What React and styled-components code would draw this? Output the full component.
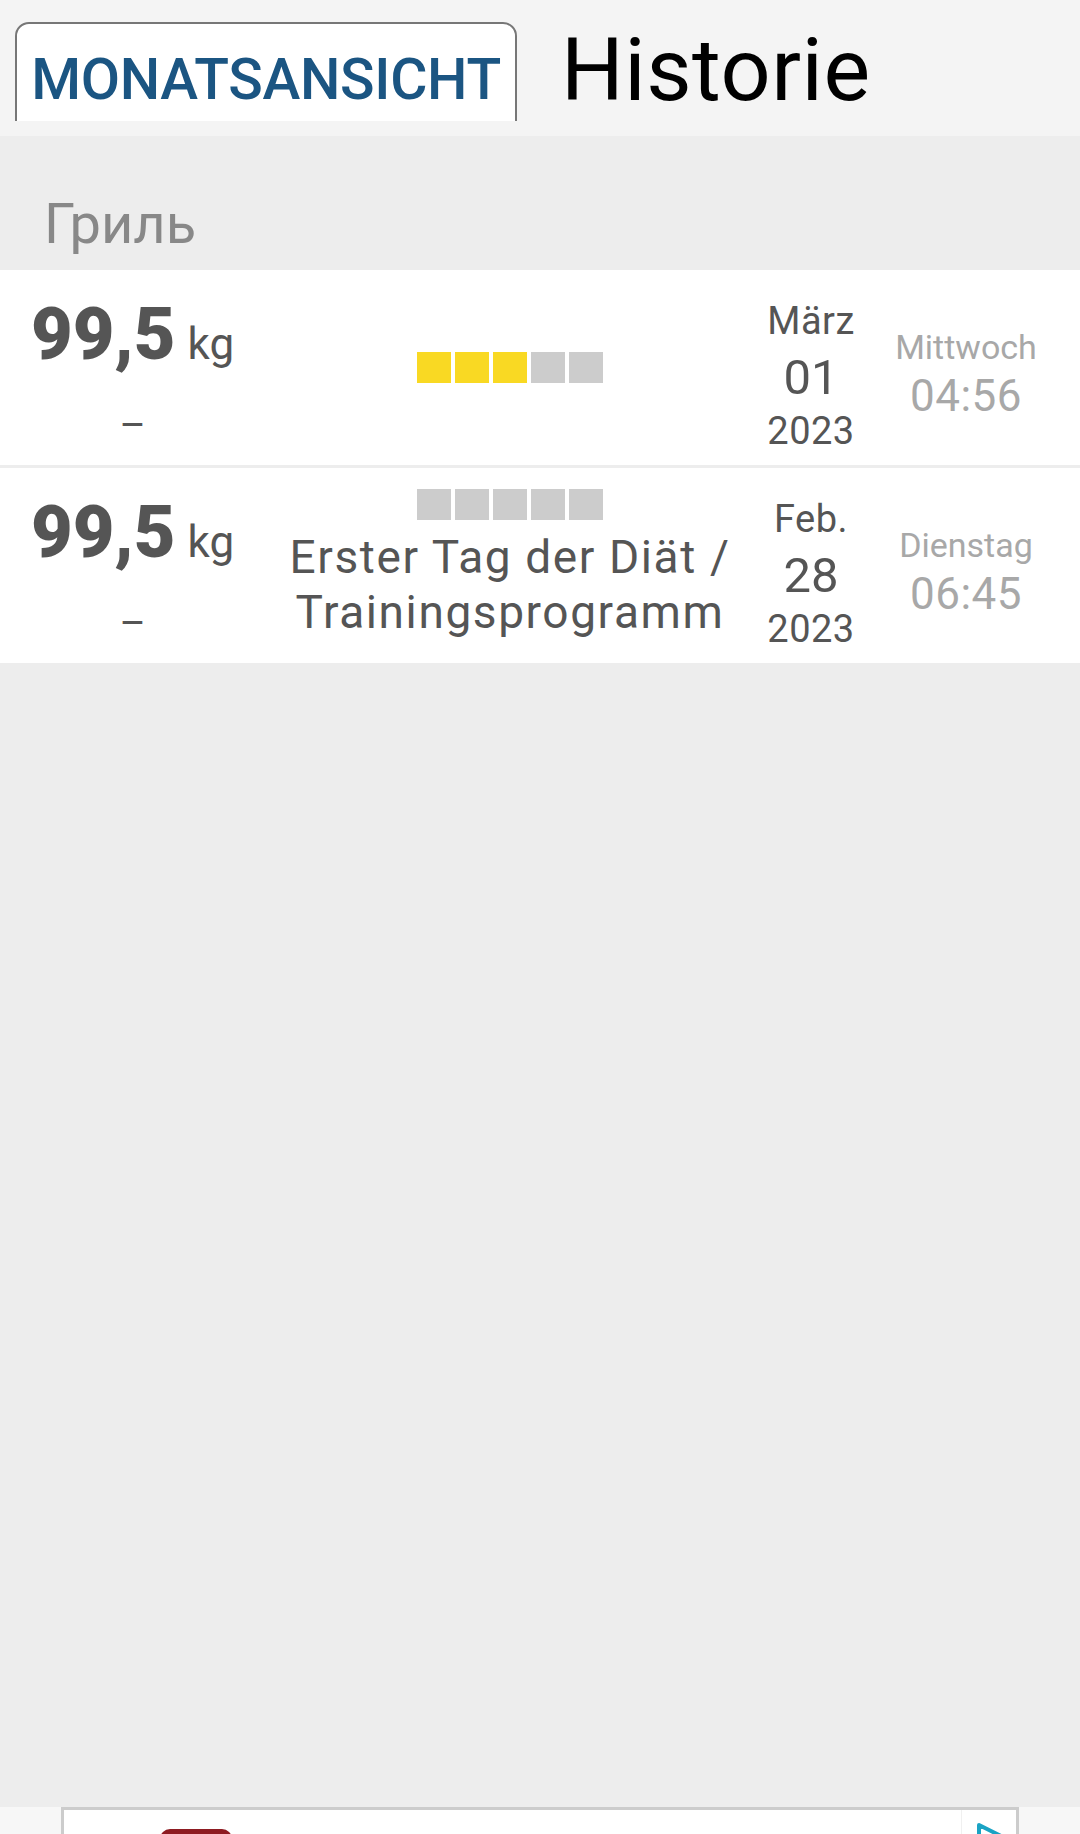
import styled, { createGlobalStyle } from 'styled-components'

const GlobalStyle = createGlobalStyle`
body {
  margin: 0;
  background: #ededed;
  font-family: Roboto, "Noto Sans", "Liberation Sans", sans-serif;
}`

const Page = styled.div`
height: 1834px;
overflow: hidden;
display: flex;
flex-direction: column;
background: #ededed;`

const Header = styled.header`
height: 136px;
box-sizing: border-box;
background: #f4f4f4;
display: flex;
align-items: flex-start;
padding: 22px 0 0 15px;`

const ButtonClip = styled.div`
width: 502px;
height: 99px;
overflow: hidden;`

const MonthButton = styled.button`
display: block;
width: 502px;
height: 115px;
box-sizing: border-box;
margin: 0;
padding: 0;
background: white;
border: 2px solid #777777;
border-radius: 14px;
color: #1b5582;
font-family: inherit;
font-size: 57px;
font-weight: 500;
line-height: 111px;
text-align: center;
letter-spacing: -0.3px;
white-space: nowrap;`

const Title = styled.h1`
margin: 4px 0 0 44px;
font-size: 88px;
font-weight: 400;
line-height: 88px;
letter-spacing: 0.5px;
color: #000;`

const SectionHeader = styled.div`
height: 134px;
box-sizing: border-box;
padding: 60px 0 0 44px;
font-size: 56px;
line-height: 56px;
color: #888888;`

const List = styled.div`
display: flex;
flex-direction: column;
gap: 3px;`

const Row = styled.div`
height: 195px;
background: white;
display: grid;
grid-template-columns: 265px 490px 112px 198px;
padding-right: 15px;`

const WeightCol = styled.div`
padding-top: 25px;
text-align: center;
color: #555555;`

const WeightLine = styled.div`
line-height: 80px;
white-space: nowrap;`

const WeightValue = styled.span`
font-size: 72px;
font-weight: 900;`

const Unit = styled.span`
font-size: 44px;
margin-left: 12px;`

const Dash = styled.div`
margin-top: 7px;
font-size: 40px;
line-height: 50px;`

const MiddleCol = styled.div`
display: flex;
flex-direction: column;
align-items: center;
justify-content: center;
padding-bottom: ${p => (p.$withNote ? '2px' : '0')};`

const Rating = styled.div`
display: flex;
gap: 4px;`

const Square = styled.span`
width: 34px;
height: 31px;
background: ${p => (p.$on ? '#f9d923' : '#cccccc')};`

const Note = styled.div`
margin-top: 10px;
font-size: 46px;
line-height: 55px;
letter-spacing: 1.6px;
color: #555555;
text-align: center;
white-space: nowrap;`

const DateCol = styled.div`
padding-top: 26px;
display: flex;
flex-direction: column;
align-items: center;
color: #555555;`

const Month = styled.div`
font-size: 38px;
line-height: 50px;
letter-spacing: 0.5px;`

const Day = styled.div`
margin-top: 4px;
font-size: 49px;
line-height: 56px;`

const Year = styled.div`
font-size: 38px;
line-height: 50px;
letter-spacing: 0.5px;`

const TimeCol = styled.div`
padding-top: 55px;
display: flex;
flex-direction: column;
align-items: center;
color: #a8a8a8;`

const Weekday = styled.div`
font-size: 34px;
line-height: 44px;`

const Time = styled.div`
margin-top: 1px;
font-size: 44px;
line-height: 52px;
letter-spacing: 0.5px;`

const Spacer = styled.div`
flex: 1;`

const AdBar = styled.div`
height: 27px;
background: #f7f7f7;
padding: 0 61px;
display: flex;`

const AdFrame = styled.div`
flex: 1;
display: flex;
background: white;
border: 3px solid #cccccc;
border-bottom: none;`

const AdContent = styled.div`
flex: 1;`

const AppIcon = styled.div`
width: 72px;
height: 72px;
margin: 19px 0 0 96px;
border-radius: 10px;
background: #8e1b22;`

const AdSide = styled.div`
width: 54px;
border-left: 1px solid #f0f0f0;`

const AdIcon = styled.svg`
display: block;
margin: 11px 0 0 13px;`

const entries = [
  { weight: '99,5', stars: 3, note: null, month: 'März', day: '01', year: '2023', weekday: 'Mittwoch', time: '04:56' },
  { weight: '99,5', stars: 0, note: ['Erster Tag der Diät /', 'Trainingsprogramm'], month: 'Feb.', day: '28', year: '2023', weekday: 'Dienstag', time: '06:45' },
]

function Entry({ entry }) {
  return (
    <Row>
      <WeightCol>
        <WeightLine>
          <WeightValue>{entry.weight}</WeightValue>
          <Unit>kg</Unit>
        </WeightLine>
        <Dash>–</Dash>
      </WeightCol>
      <MiddleCol $withNote={!!entry.note}>
        <Rating>
          {[0, 1, 2, 3, 4].map(i => <Square key={i} $on={i < entry.stars} />)}
        </Rating>
        {entry.note && (
          <Note>
            {entry.note[0]}
            <br />
            {entry.note[1]}
          </Note>
        )}
      </MiddleCol>
      <DateCol>
        <Month>{entry.month}</Month>
        <Day>{entry.day}</Day>
        <Year>{entry.year}</Year>
      </DateCol>
      <TimeCol>
        <Weekday>{entry.weekday}</Weekday>
        <Time>{entry.time}</Time>
      </TimeCol>
    </Row>
  )
}

export default function App() {
  return (
    <Page>
      <GlobalStyle />
      <Header>
        <ButtonClip>
          <MonthButton>MONATSANSICHT</MonthButton>
        </ButtonClip>
        <Title>Historie</Title>
      </Header>
      <SectionHeader>Гриль</SectionHeader>
      <List>
        {entries.map((e, i) => <Entry key={i} entry={e} />)}
      </List>
      <Spacer />
      <AdBar>
        <AdFrame>
          <AdContent>
            <AppIcon />
          </AdContent>
          <AdSide>
            <AdIcon width="32" height="32" viewBox="0 0 32 32">
              <path d="M4 4 L28 16 L4 28 Z" fill="none" stroke="#1aa3c4" strokeWidth="4" strokeLinejoin="round" />
            </AdIcon>
          </AdSide>
        </AdFrame>
      </AdBar>
    </Page>
  )
}
